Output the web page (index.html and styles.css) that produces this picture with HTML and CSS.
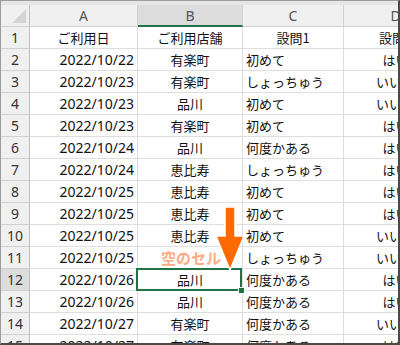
FILE: index.html
```html
<!DOCTYPE html>
<html lang="ja">
<head>
<meta charset="utf-8">
<link rel="stylesheet" href="styles.css">
</head>
<body>
<div class="frame">
  <div class="strip"></div>
  <div class="sheet">
    <div class="hdr corner"><span class="tri"></span></div>
    <div class="hdr col">A</div>
    <div class="hdr col sel-col">B</div>
    <div class="hdr col">C</div>
    <div class="hdr col">D</div>

    <div class="hdr row">1</div>
    <div class="c ctr">ご利用日</div><div class="c ctr">ご利用店舗</div><div class="c ctr">設問1</div><div class="c ctr">設問2</div>

    <div class="hdr row">2</div>
    <div class="c num">2022/10/22</div><div class="c ctr">有楽町</div><div class="c">初めて</div><div class="c ctr">はい</div>
    <div class="hdr row">3</div>
    <div class="c num">2022/10/23</div><div class="c ctr">有楽町</div><div class="c">しょっちゅう</div><div class="c ctr">いいえ</div>
    <div class="hdr row">4</div>
    <div class="c num">2022/10/23</div><div class="c ctr">品川</div><div class="c">初めて</div><div class="c ctr">いいえ</div>
    <div class="hdr row">5</div>
    <div class="c num">2022/10/23</div><div class="c ctr">有楽町</div><div class="c">初めて</div><div class="c ctr">はい</div>
    <div class="hdr row">6</div>
    <div class="c num">2022/10/24</div><div class="c ctr">品川</div><div class="c">何度かある</div><div class="c ctr">はい</div>
    <div class="hdr row">7</div>
    <div class="c num">2022/10/24</div><div class="c ctr">恵比寿</div><div class="c">しょっちゅう</div><div class="c ctr">はい</div>
    <div class="hdr row">8</div>
    <div class="c num">2022/10/25</div><div class="c ctr">恵比寿</div><div class="c">初めて</div><div class="c ctr">はい</div>
    <div class="hdr row">9</div>
    <div class="c num">2022/10/25</div><div class="c ctr">恵比寿</div><div class="c">初めて</div><div class="c ctr">はい</div>
    <div class="hdr row">10</div>
    <div class="c num">2022/10/25</div><div class="c ctr">恵比寿</div><div class="c">初めて</div><div class="c ctr">いいえ</div>
    <div class="hdr row">11</div>
    <div class="c num">2022/10/25</div><div class="c ctr"></div><div class="c">しょっちゅう</div><div class="c ctr">いいえ</div>
    <div class="hdr row sel-row">12</div>
    <div class="c num">2022/10/26</div><div class="c ctr">品川</div><div class="c">何度かある</div><div class="c ctr">はい</div>
    <div class="hdr row">13</div>
    <div class="c num">2022/10/26</div><div class="c ctr">品川</div><div class="c">何度かある</div><div class="c ctr">はい</div>
    <div class="hdr row">14</div>
    <div class="c num">2022/10/27</div><div class="c ctr">有楽町</div><div class="c">何度かある</div><div class="c ctr">いいえ</div>
    <div class="hdr row">15</div>
    <div class="c num">2022/10/27</div><div class="c ctr">有楽町</div><div class="c">何度かある</div><div class="c ctr">はい</div>
  </div>

  <div class="selection"></div>
  <div class="handle"></div>
  <div class="label">空のセル</div>
  <svg class="arrow" width="32" height="68" viewBox="0 0 32 68">
    <path d="M11 2 H21 V31 H30 L16 65 L2 31 H11 Z" fill="#ff6a00" stroke="#ffffff" stroke-width="1.5" stroke-linejoin="miter"/>
  </svg>
</div>
</body>
</html>
```

FILE: styles.css
```css
* { box-sizing: border-box; }
html, body { margin: 0; padding: 0; background: #ffffff; }
.frame {
  position: relative;
  width: 400px;
  height: 345px;
  overflow: hidden;
  border-left: 1px solid #9c9c9c;
  border-top: 1px solid #9c9c9c;
  border-right: 2px solid #4a4a4a;
  border-bottom: 2px solid #4a4a4a;
  background: #fff;
  font-family: "Noto Sans CJK JP", sans-serif;
}
.strip {
  height: 4px;
  background: #e6e6e6;
}
.sheet {
  display: grid;
  grid-template-columns: 29px 108px 105px 101px 104px;
  grid-auto-rows: 22px;
  width: 447px;
}
.hdr {
  background: #f0f0f0;
  color: #444;
  font-family: "Noto Sans", sans-serif;
  font-size: 14px;
  display: flex;
  align-items: center;
  justify-content: center;
  border-right: 1px solid #d0d0d0;
  border-bottom: 1px solid #d0d0d0;
}
.hdr.col { color: #555; }
.hdr.row { border-right: 1px solid #bdbdbd; color: #333; font-size: 14px; }
.corner { position: relative; border-right: 1px solid #bdbdbd; }
.tri {
  position: absolute;
  right: 3px;
  bottom: 3px;
  width: 0;
  height: 0;
  border-left: 14px solid transparent;
  border-bottom: 14px solid #d4d4d4;
}
.sel-col {
  background: #dcdcdc;
  border-bottom: 2px solid #217346;
  color: #217346;
}
.sel-row {
  background: #dcdcdc;
  border-right: 2px solid #217346;
  color: #217346;
}
.c {
  font-size: 13px;
  color: #111;
  display: flex;
  align-items: center;
  padding: 0 3px;
  white-space: nowrap;
  overflow: hidden;
  border-right: 1px solid #dedede;
  border-bottom: 1px solid #dedede;
}
.c.ctr { justify-content: center; }
.c.num {
  justify-content: flex-end;
  font-family: "Noto Sans", "Noto Sans CJK JP", sans-serif;
  font-size: 14px;
}
.selection {
  position: absolute;
  left: 135px;
  top: 267px;
  width: 106px;
  height: 23px;
  border: 2px solid #217346;
}
.handle {
  position: absolute;
  left: 237px;
  top: 286px;
  width: 7px;
  height: 7px;
  background: #217346;
  border: 1px solid #fff;
}
.label {
  position: absolute;
  left: 160px;
  top: 246px;
  font-size: 15px;
  font-weight: 700;
  color: #ffaa85;
  letter-spacing: 0;
  text-shadow: 1px 0 #fff, -1px 0 #fff, 0 1px #fff, 0 -1px #fff, 1px 1px #fff, -1px -1px #fff, 1px -1px #fff, -1px 1px #fff;
}
.arrow {
  position: absolute;
  left: 213px;
  top: 204px;
}
```
